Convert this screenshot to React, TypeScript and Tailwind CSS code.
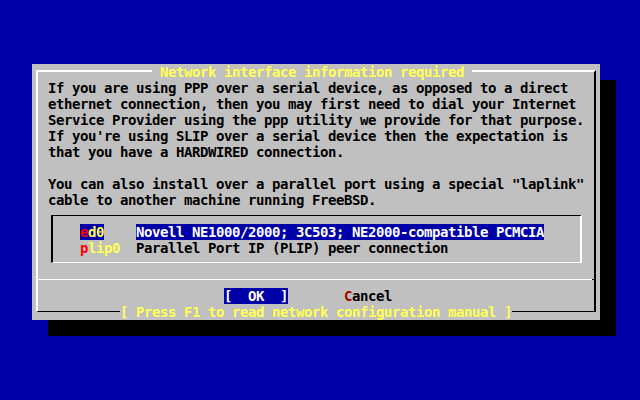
const bodyLines = [
  "If you are using PPP over a serial device, as opposed to a direct",
  "ethernet connection, then you may first need to dial your Internet",
  "Service Provider using the ppp utility we provide for that purpose.",
  "If you're using SLIP over a serial device then the expectation is",
  "that you have a HARDWIRED connection.",
  "",
  'You can also install over a parallel port using a special "laplink"',
  "cable to another machine running FreeBSD.",
];

export default function App() {
  return (
    <div className="h-[400px] w-[640px] overflow-hidden bg-[#0000a8] pl-[32px] pt-[64px] font-['DejaVu_Sans_Mono',monospace] text-[14px] font-bold leading-4 tracking-[-0.4287px] text-black">
      {/* dialog */}
      <div className="h-[256px] w-[568px] bg-[#c0c0c0] px-[4px] pt-[6px] shadow-[16px_16px_0_0_#000]">
        <div className="flex flex-col border-t-2 border-r-2 border-b border-l-2 border-t-white border-r-black border-b-black border-l-white">
          {/* title on top border */}
          <div className="-mt-2 flex h-4">
            <span className="ml-[114px] whitespace-pre bg-[#c0c0c0] text-[#ffff54]">
              {" Network interface information required "}
            </span>
          </div>

          <div className="pl-[10px]">
            {bodyLines.map((line, i) => (
              <div key={i} className="h-4 whitespace-pre">
                {line}
              </div>
            ))}
          </div>

          {/* menu list */}
          <div className="mt-[7px] mb-[9px] ml-[13px] w-[531px] border-t border-r-2 border-b border-l-2 border-t-black border-r-white border-b-white border-l-black pt-2 pb-[6px] pl-[27px]">
            <div className="flex h-4 whitespace-pre">
              <span className="bg-[#0000a8]">
                <span className="text-[#ff0000]">e</span>
                <span className="text-[#ffff54]">d0</span>
              </span>
              <span className="ml-[32px] bg-[#0000a8] text-white">
                Novell NE1000/2000; 3C503; NE2000-compatible PCMCIA
              </span>
            </div>
            <div className="flex h-4 whitespace-pre">
              <span>
                <span className="text-[#ff0000]">p</span>
                <span className="text-[#ffff54]">lip0</span>
              </span>
              <span className="ml-[16px]">Parallel Port IP (PLIP) peer connection</span>
            </div>
          </div>

          {/* separator */}
          <div className="flex h-4 pt-[7px]">
            <div className="h-px flex-1 bg-white" />
            <div className="h-px w-[2px] bg-black" />
          </div>

          {/* buttons */}
          <div className="flex h-4 whitespace-pre">
            <span className="ml-[186px] bg-[#0000a8] text-white">[  OK  ]</span>
            <span className="ml-[56px]">
              <span className="text-[#a80000]">C</span>ancel
            </span>
          </div>

          {/* help line on bottom border */}
          <div className="-mb-[9px] flex h-4">
            <span className="ml-[82px] whitespace-pre bg-[#c0c0c0] text-[#ffff54]">
              [ Press F1 to read network configuration manual ]
            </span>
          </div>
        </div>
      </div>
    </div>
  );
}
